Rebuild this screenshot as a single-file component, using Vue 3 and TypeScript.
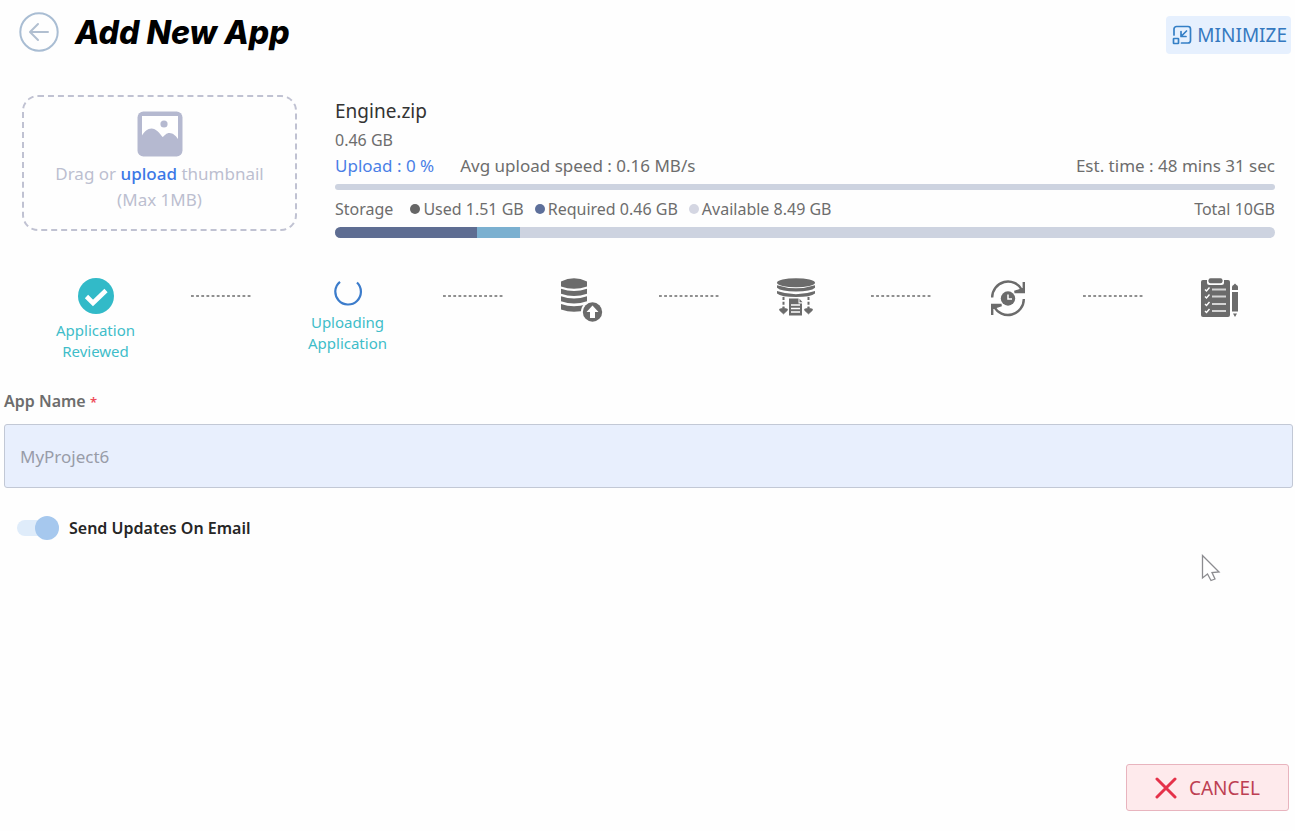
<script setup lang="ts">
import { ref } from 'vue'

interface Step {
  id: string
  label: string
}

const steps: Step[] = [
  { id: 'reviewed', label: 'Application Reviewed' },
  { id: 'uploading', label: 'Uploading Application' },
  { id: 'database', label: '' },
  { id: 'extract', label: '' },
  { id: 'sync', label: '' },
  { id: 'checklist', label: '' },
]

const total = 10
const used = 1.51
const required = 0.46
const legend = [
  { kind: 'used', text: 'Used 1.51 GB' },
  { kind: 'required', text: 'Required 0.46 GB' },
  { kind: 'available', text: 'Available 8.49 GB' },
]

const appName = ref('MyProject6')
const sendUpdates = ref(true)
</script>

<template>
  <main class="page">
    <header class="header">
      <button class="back" type="button" aria-label="Back">
        <svg width="40" height="40" viewBox="0 0 40 40" fill="none" stroke-linecap="round" stroke-linejoin="round">
          <circle cx="20" cy="20" r="18.7" stroke="#a9bdd3" stroke-width="2" />
          <path d="M29 20H11.500M19 12l-8 8 8 8" stroke="#b1bfd0" stroke-width="2" />
        </svg>
      </button>
      <h1 class="title">Add New App</h1>
      <button class="minimize" type="button">
        <svg width="20" height="20" viewBox="0 0 20 20" fill="none" stroke="#347fc6" stroke-width="1.7" stroke-linecap="round" stroke-linejoin="round">
          <path d="M2 10V4a2.500 2.500 0 0 1 2.500-2.500H16A2.500 2.500 0 0 1 18.500 4v11.500A2.500 2.500 0 0 1 16 18H9.500" />
          <rect x="1.500" y="13.500" width="5" height="5" rx=".5" />
          <path d="M14.500 6l-5 5M9 6.500V11.500h5" />
        </svg>
        <span>MINIMIZE</span>
      </button>
    </header>

    <section class="summary">
      <div class="dropzone">
        <svg width="46" height="46" viewBox="0 0 46 46">
          <rect x="0.500" y="0.500" width="45" height="45" rx="6" fill="#b5b9d0" />
          <path d="M5 5h36v23c-2-3-5-6-8.500-6-3.500 0-4.500 2.500-7 4-3-4-6.500-8.500-11-8.500-4 0-7 3-9.500 7z" fill="#fff" />
          <circle cx="27" cy="13" r="3.600" fill="#b5b9d0" />
        </svg>
        <p class="drop-text">
          Drag or <label class="upload" for="thumbnail">upload</label> thumbnail<br />(Max 1MB)
        </p>
        <input id="thumbnail" class="hidden-file" type="file" accept="image/*" />
      </div>

      <div class="details">
        <h2 class="file-name">Engine.zip</h2>
        <p class="file-size">0.46 GB</p>
        <div class="row transfer">
          <span class="percent">Upload : 0 %</span>
          <span>Avg upload speed : 0.16 MB/s</span>
          <span class="end">Est. time : 48 mins 31 sec</span>
        </div>
        <div class="bar thin" role="progressbar" aria-label="Upload" aria-valuenow="0"></div>
        <div class="row storage">
          <span class="storage-name">Storage</span>
          <span v-for="item in legend" :key="item.kind" class="legend">
            <i class="dot" :class="item.kind"></i>{{ item.text }}
          </span>
          <span class="end">Total 10GB</span>
        </div>
        <div class="bar">
          <div class="fill-used" :style="{ width: (used / total) * 100 + '%' }"></div>
          <div class="fill-required" :style="{ width: (required / total) * 100 + '%' }"></div>
        </div>
      </div>
    </section>

    <ol class="steps">
      <template v-for="(step, index) in steps" :key="step.id">
        <li v-if="index > 0" class="connector" aria-hidden="true">
          <svg width="61" height="4" viewBox="0 0 61 4">
            <path d="M0 2h61" stroke="#8f8f8f" stroke-width="2" stroke-dasharray="2.800 2.350" />
          </svg>
        </li>
        <li class="step">
          <svg v-if="step.id === 'reviewed'" width="36" height="36" viewBox="0 0 36 36">
            <circle cx="18" cy="18" r="18" fill="#32bac8" />
            <path d="M8.500 18.500l6.500 6.500L28 12.500" fill="none" stroke="#fff" stroke-width="4.600" />
          </svg>
          <svg v-else-if="step.id === 'uploading'" width="28" height="28" viewBox="0 0 28 28">
            <path d="M6 3.800A12.800 12.800 0 1 0 23 4.500" fill="none" stroke="#3c7ccb" stroke-width="2.200" />
          </svg>
          <svg v-else-if="step.id === 'database'" width="44" height="44" viewBox="0 0 44 44" fill="#6b6b6b">
            <path d="M1 3.500q13-6.500 26 0v5q-13 4.500-26 0z" />
            <path d="M1 10.800q13 4.500 26 0v5q-13 4.500-26 0z" />
            <path d="M1 18.300q13 4.500 26 0v5q-13 4.500-26 0z" />
            <path d="M1 26q13 4.500 26 0v5.500q-13 4.500-26 0z" />
            <circle cx="32.500" cy="34" r="11.500" fill="#fefefe" />
            <circle cx="32.500" cy="34" r="9.700" />
            <path d="M32.500 27.500l6 6.500H35v6h-5v-6h-3.500z" fill="#fff" />
          </svg>
          <svg v-else-if="step.id === 'extract'" width="40" height="40" viewBox="0 0 40 40" fill="#6b6b6b">
            <ellipse cx="20" cy="4.800" rx="19" ry="4.500" />
            <path d="M1 7.200q19 6 38 0v2.500q-4 3.800-19 3.800t-19-3.800z" />
            <path d="M1 13q19 6.500 38 0v2.500q-4 3.500-19 3.500t-19-3.500z" />
            <path d="M13 20.500h9.500v5H26V37.500H13z" />
            <path d="M23.500 20.800l3 3.500h-3z" />
            <path d="M15 27h9M15 30.500h9M15 34h9" stroke="#fff" stroke-width="1.400" />
            <path d="M7.500 19v11M32.500 19v11" stroke="#6b6b6b" stroke-width="2" stroke-dasharray="3 1.800" />
            <path d="M3.500 31l2.500-.5 1.500-1.500 1.500 1.500 2.500.5-.2 1.500-3.800 3.500-3.800-3.500zM28.500 31l2.500-.5 1.500-1.500 1.500 1.500 2.500.5-.2 1.500-3.800 3.500-3.800-3.500z" stroke="#6b6b6b" stroke-width=".6" />
          </svg>
          <svg v-else-if="step.id === 'sync'" width="40" height="40" viewBox="0 0 40 40" fill="none" stroke="#6b6b6b" stroke-width="2.400">
            <path d="M4.200 19.500A15.800 15.800 0 0 1 34 12M35.800 21A15.800 15.800 0 0 1 6 28.500" />
            <path d="M35.800 4v10H26.500L35.500 11M4.200 37V27h9.300L4.500 30" />
            <circle cx="20" cy="20.500" r="7.200" fill="#6b6b6b" stroke="none" />
            <path d="M20 16.500V21h4" stroke="#fff" stroke-width="1.500" />
          </svg>
          <svg v-else width="40" height="40" viewBox="0 0 40 40">
            <rect x="1" y="2" width="29" height="37" rx="2" fill="#6b6b6b" />
            <path d="M7 0h17v4.500q0 2.500-2.500 2.500h-12Q7 7 7 4.500z" fill="#fefefe" />
            <rect x="8.500" y="0.300" width="14" height="5" rx="2" fill="#6b6b6b" />
            <path d="M12 11.500h14M12 18.500h14M12 26h14M12 33h14" stroke="#d4d4d4" stroke-width="2" />
            <path d="M5 11.500l1.500 1.500L9.500 9.500M5 18.500l1.500 1.500L9.500 16.500M5 26l1.500 1.500L9.500 24M5 33l1.500 1.500L9.500 31" fill="none" stroke="#fff" stroke-width="1.400" />
            <path d="M32 12V9q0-1.500 1.500-2l1.500-1.500L36.500 7q1.500.5 1.500 2v3zM32 14h6v19.500h-6zM33 35.500h4l-2 3.500z" fill="#6b6b6b" />
          </svg>
          <span v-if="step.label" class="step-label">{{ step.label }}</span>
        </li>
      </template>
    </ol>

    <form class="form" @submit.prevent>
      <label class="field-label" for="app-name">App Name <span class="star">*</span></label>
      <input id="app-name" v-model="appName" class="text-input" type="text" />
      <label class="switch-row">
        <input v-model="sendUpdates" class="switch" type="checkbox" role="switch" />
        <span>Send Updates On Email</span>
      </label>
    </form>

    <footer class="footer">
      <button class="cancel" type="button">
        <svg width="22" height="22" viewBox="0 0 22 22" fill="none" stroke="#e5324a" stroke-width="3" stroke-linecap="round">
          <path d="M2 2l18 18M20 2L2 20" />
        </svg>
        <span>CANCEL</span>
      </button>
    </footer>

    <svg class="pointer" width="20" height="28" viewBox="0 0 20 28" aria-hidden="true">
      <path d="M1.500 1.500v22.500l5-4 3.500 6.500 4-1.500-3-6.500 7-.5z" fill="#fff" stroke="#8c8c90" stroke-width="1.300" />
    </svg>
  </main>
</template>

<style>
body {
  margin: 0;
  background: #fefefe;
}
</style>

<style scoped>
.page {
  position: relative;
  box-sizing: border-box;
  min-height: 100vh;
  display: flex;
  flex-direction: column;
  font-family: "Noto Sans", "Open Sans", sans-serif;
  font-size: 16px;
  line-height: 26px;
  color: #6d6d6d;
}
h1, h2, p, ol {
  margin: 0;
  padding: 0;
  font-weight: 400;
}
button {
  font: inherit;
  cursor: pointer;
}
svg {
  display: block;
  flex: none;
}
.header {
  display: flex;
  align-items: flex-start;
  padding: 12px 4px 0 19px;
}
.back {
  padding: 0;
  border: 0;
  background: none;
}
.title {
  margin-left: 16px;
  font-family: Inter, "Liberation Sans", sans-serif;
  font-size: 32px;
  font-style: italic;
  font-weight: 800;
  line-height: 42px;
  color: #000;
}
.minimize {
  display: flex;
  align-items: center;
  gap: 5px;
  height: 38px;
  margin: 4px 0 0 auto;
  padding: 0 4px 0 6px;
  border: 0;
  border-radius: 4px;
  background: #e6f0fe;
  color: #3579c0;
  font-size: 19px;
}
.summary {
  display: flex;
  gap: 38px;
  padding: 41px 20px 0 22px;
}
.dropzone {
  position: relative;
  box-sizing: border-box;
  width: 275px;
  height: 136px;
  display: flex;
  flex-direction: column;
  align-items: center;
  gap: 4px;
  padding-top: 14px;
  border: 2px dashed #c0c2d2;
  border-radius: 16px;
}
.drop-text {
  font-size: 17px;
  text-align: center;
  color: #bcbfd0;
}
.upload {
  color: #3c78e6;
  font-weight: 500;
  cursor: pointer;
}
.hidden-file {
  position: absolute;
  width: 1px;
  height: 1px;
  opacity: 0;
}
.details {
  flex: 1;
}
.file-name {
  font-size: 19px;
  line-height: 32px;
  color: #333;
}
.row {
  display: flex;
  align-items: center;
  white-space: nowrap;
}
.transfer {
  font-size: 17px;
}
.percent {
  margin-right: 26px;
  color: #4a7fe6;
}
.end {
  margin-left: auto;
}
.bar {
  display: flex;
  height: 11px;
  border-radius: 6px;
  overflow: hidden;
  background: #cdd3e0;
}
.thin {
  height: 6px;
  margin: 5px 0 6px;
}
.storage {
  margin-bottom: 5px;
}
.storage-name {
  margin-right: 17px;
}
.legend {
  display: flex;
  align-items: center;
  gap: 3px;
  margin-right: 11px;
}
.dot {
  width: 10px;
  height: 10px;
  border-radius: 50%;
}
.used {
  background: #666;
}
.required {
  background: #5d6f9a;
}
.available {
  background: #d4d6e2;
}
.fill-used {
  background: #5e6d92;
}
.fill-required {
  background: #7bb0d0;
}
.steps {
  display: flex;
  justify-content: space-evenly;
  height: 84px;
  margin-top: 40px;
  list-style: none;
}
.connector {
  padding-top: 16px;
}
.step {
  display: flex;
  flex-direction: column;
  align-items: center;
  gap: 6px;
}
.step-label {
  width: 80px;
  font-size: 15px;
  line-height: 21px;
  text-align: center;
  color: #3fbdc9;
}
.form {
  display: flex;
  flex-direction: column;
  padding: 26px 2px 0 4px;
}
.field-label {
  font-weight: 600;
}
.star {
  color: #ee4b5b;
  font-size: 13px;
}
.text-input {
  box-sizing: border-box;
  width: 100%;
  height: 64px;
  margin-top: 9px;
  padding: 0 15px;
  border: 1px solid #c2c8d5;
  border-radius: 3px;
  background: #e8effd;
  color: #989ca8;
  font: inherit;
  font-size: 17px;
}
.switch-row {
  display: flex;
  align-items: center;
  align-self: flex-start;
  gap: 10px;
  margin: 27px 0 0 13px;
  color: #262626;
  font-weight: 600;
}
.switch {
  appearance: none;
  display: flex;
  align-items: center;
  justify-content: flex-end;
  width: 42px;
  height: 16px;
  margin: 0;
  border-radius: 8px;
  background: #dfecfa;
}
.switch::before {
  content: "";
  width: 24px;
  height: 24px;
  border-radius: 50%;
  background: #a6c8ee;
}
.switch:not(:checked) {
  justify-content: flex-start;
}
.footer {
  display: flex;
  justify-content: flex-end;
  margin-top: auto;
  padding: 0 6px 20px;
}
.cancel {
  display: flex;
  align-items: center;
  gap: 12px;
  height: 47px;
  padding: 0 28px;
  border: 1px solid #e8b4be;
  border-radius: 3px;
  background: #feeaec;
  color: #bd3f52;
  font-size: 19px;
}
.pointer {
  position: absolute;
  top: 554px;
  left: 1201px;
}
</style>
